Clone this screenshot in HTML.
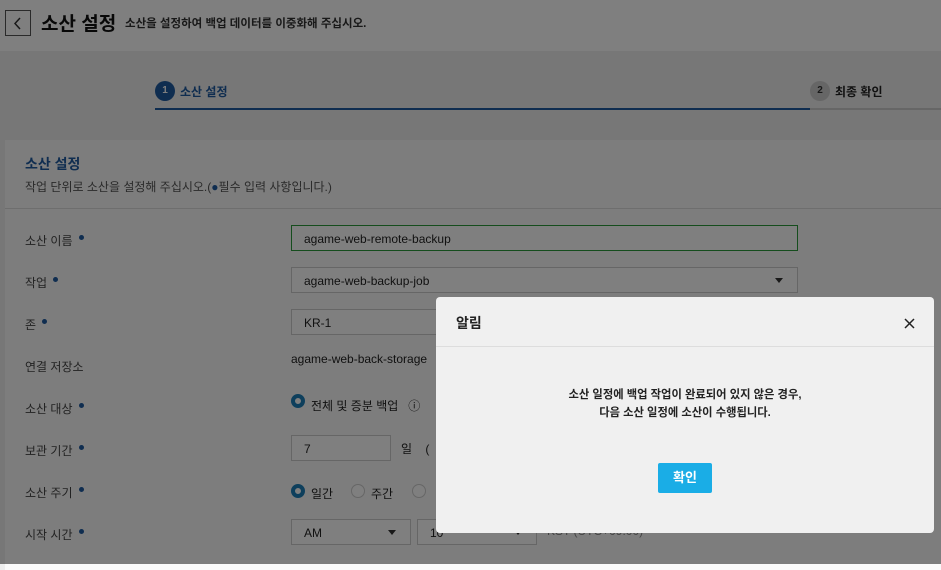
<!DOCTYPE html>
<html><head><meta charset="utf-8"><style>
*{box-sizing:border-box;margin:0;padding:0}
body{width:941px;height:564px;overflow:hidden;position:relative;background:#eeeeee;font-family:"Liberation Sans","Noto Sans CJK KR",sans-serif;color:#333}
.hdr{position:absolute;left:0;top:0;width:941px;height:51px;background:#fff}
.back{position:absolute;left:5px;top:10px;width:26px;height:26px;border:1px solid #555;}
.back svg{position:absolute;left:7px;top:6px}
.title{position:absolute;left:41px;top:9px;font-size:19px;font-weight:bold;color:#111}
.sub{position:absolute;left:125px;top:15px;font-size:11.5px;font-weight:bold;color:#333}
.step1{position:absolute;left:155px;top:80px;width:655px;height:30px;border-bottom:2px solid #1e5aa0}
.circ{position:absolute;width:20px;height:20px;border-radius:50%;font-size:10px;font-weight:bold;text-align:center;line-height:20px;color:#fff}
.st{position:absolute;font-size:12px;font-weight:bold}
.step2{position:absolute;left:810px;top:80px;width:131px;height:30px;border-bottom:2px solid #ccc}
.card{position:absolute;left:5px;top:140px;width:940px;height:430px;background:#fafafa}
.card .h{position:absolute;left:20px;top:14px;font-size:14px;font-weight:bold;color:#1e5aa0}
.card .d{position:absolute;left:20px;top:38px;font-size:12px;color:#555}
.card .line{position:absolute;left:0;top:68px;width:940px;height:1px;background:#ddd}
.lab{position:absolute;left:25px;font-size:12px;color:#444}
.lab i{display:inline-block;width:5px;height:5px;border-radius:50%;background:#1e5aa0;vertical-align:top;margin:3px 0 0 6px}
.inp{position:absolute;left:291px;width:507px;height:26px;border:1px solid #ccc;background:#fff;font-size:12px;padding:6px 12px;color:#222}
.tri{position:absolute;right:14px;top:10px;border:4px solid transparent;border-top:5px solid #333}
.txt{position:absolute;font-size:12px;color:#222}
.rad{position:absolute;width:14px;height:14px;border-radius:50%;border:1px solid #ccc;background:#fff}
.rad.on{border:4px solid #1c7fb8}
.ov{position:absolute;left:0;top:0;width:941px;height:564px;background:rgba(0,0,0,.5)}
.modal{position:absolute;left:436px;top:297px;width:498px;height:236px;background:#f0f0f0;border-radius:4px}
.modal .mh{position:absolute;left:20px;top:16px;font-size:14px;font-weight:bold;color:#222}
.modal .ml{position:absolute;left:0;top:49px;width:498px;height:1px;background:#ddd}
.modal .mb{position:absolute;left:0;top:89px;width:498px;text-align:center;font-size:11.3px;font-weight:bold;line-height:18px;color:#222}
.btn{position:absolute;left:222px;top:166px;width:54px;height:30px;background:#1aade6;color:#fff;font-size:13px;font-weight:bold;text-align:center;line-height:30px;border-radius:2px}
</style></head><body>
<div class="hdr">
<div class="back"><svg width="10" height="13" viewBox="0 0 10 13"><path d="M7 1L2 6.5L7 12" fill="none" stroke="#333" stroke-width="1.5"/></svg></div>
<div class="title">소산 설정</div>
<div class="sub">소산을 설정하여 백업 데이터를 이중화해 주십시오.</div>
</div>
<div class="step1"><div class="circ" style="left:0;top:1px;background:#1e5aa0">1</div><div class="st" style="left:25px;top:3px;color:#1e5aa0">소산 설정</div></div>
<div class="step2"><div class="circ" style="left:0;top:1px;background:#ccc;color:#333">2</div><div class="st" style="left:25px;top:3px;color:#222">최종 확인</div></div>
<div class="card">
<div class="h">소산 설정</div>
<div class="d">작업 단위로 소산을 설정해 주십시오.(<span style="color:#1e5aa0">●</span>필수 입력 사항입니다.)</div>
<div class="line"></div>
</div>
<div class="lab" style="top:232px">소산 이름<i></i></div>
<div class="lab" style="top:274px">작업<i></i></div>
<div class="lab" style="top:316px">존<i></i></div>
<div class="lab" style="top:358px">연결 저장소</div>
<div class="lab" style="top:400px">소산 대상<i></i></div>
<div class="lab" style="top:442px">보관 기간<i></i></div>
<div class="lab" style="top:484px">소산 주기<i></i></div>
<div class="lab" style="top:526px">시작 시간<i></i></div>
<div class="inp" style="top:225px;border-color:#2a9a3a">agame-web-remote-backup</div>
<div class="inp" style="top:267px">agame-web-backup-job<div class="tri"></div></div>
<div class="inp" style="top:309px">KR-1<div class="tri"></div></div>
<div class="txt" style="left:291px;top:352px">agame-web-back-storage</div>
<div class="rad on" style="left:291px;top:394px"></div>
<div class="txt" style="left:311px;top:397px;font-size:12px">전체 및 증분 백업 &nbsp; ⓘ</div>
<div class="inp" style="top:435px;width:100px">7</div>
<div class="txt" style="left:401px;top:440px">일 &nbsp; &nbsp;(</div>
<div class="rad on" style="left:291px;top:484px"></div><div class="txt" style="left:311px;top:485px;font-size:12px">일간</div>
<div class="rad" style="left:351px;top:484px"></div><div class="txt" style="left:371px;top:485px;font-size:12px">주간</div>
<div class="rad" style="left:412px;top:484px"></div>
<div class="inp" style="top:519px;width:120px">AM<div class="tri"></div></div>
<div class="inp" style="top:519px;left:417px;width:120px">10<div class="tri"></div></div>
<div class="txt" style="left:547px;top:524px;color:#888">KST (UTC+09:00)</div>
<div class="ov"></div>
<div class="modal">
<div class="mh">알림</div>
<svg style="position:absolute;left:468px;top:21px" width="11" height="11" viewBox="0 0 11 11"><path d="M1 1L10 10M10 1L1 10" stroke="#222" stroke-width="1.5"/></svg>
<div class="ml"></div>
<div class="mb">소산 일정에 백업 작업이 완료되어 있지 않은 경우,<br>다음 소산 일정에 소산이 수행됩니다.</div>
<div class="btn">확인</div>
</div>
</body></html>
